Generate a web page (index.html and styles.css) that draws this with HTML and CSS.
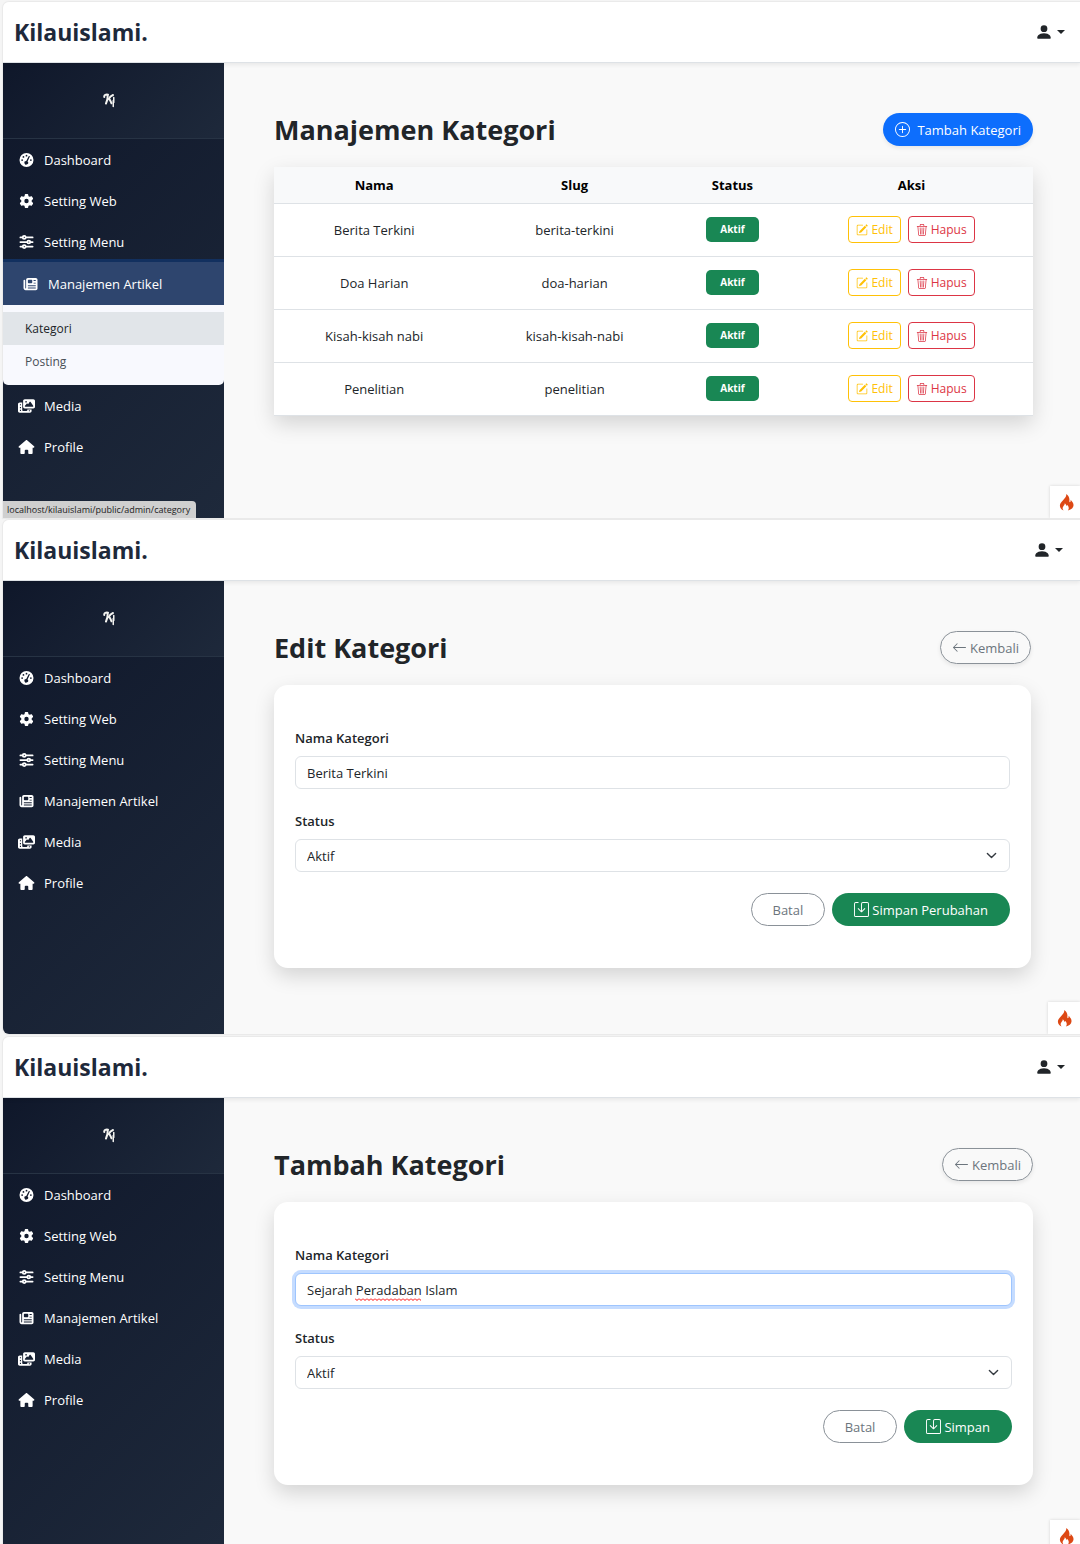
FILE: index.html
```html
<!DOCTYPE html>
<html lang="id">
<head>
<meta charset="utf-8">
<meta name="viewport" content="width=device-width, initial-scale=1">
<title>Kilauislami</title>
<link rel="stylesheet" href="styles.css">
</head>
<body>
<svg class="sprite" aria-hidden="true">
  <symbol id="i-dash" viewBox="0 0 16 16"><path fill-rule="evenodd" d="M8 0a8 8 0 1 1 0 16A8 8 0 0 1 8 0zM8 2a1 1 0 1 0 0 2 1 1 0 0 0 0-2zM4.500 3.500a1 1 0 1 0 0 2 1 1 0 0 0 0-2zM3 7a1 1 0 1 0 0 2 1 1 0 0 0 0-2zM13 7a1 1 0 1 0 0 2 1 1 0 0 0 0-2zM10.500 3.800L7.700 9a2.100 2.100 0 1 0 1.500.600l2.500-5.200a.650.650 0 0 0-1.200-.600z"/></symbol>
  <symbol id="i-gear" viewBox="0 0 512 512"><path d="M495.9 166.6c3.2 8.7 .5 18.4-6.4 24.6l-43.3 39.4c1.1 8.3 1.7 16.8 1.7 25.4s-.6 17.1-1.7 25.4l43.3 39.4c6.9 6.2 9.6 15.9 6.4 24.6c-4.4 11.9-9.7 23.3-15.8 34.3l-4.7 8.1c-6.600 11-14 21.400-22.100 31.200c-5.900 7.200-15.700 9.600-24.500 6.800l-55.700-17.700c-13.400 10.300-28.200 18.900-44 25.400l-12.500 57.100c-2 9.100-9 16.300-18.200 17.800c-13.800 2.300-28 3.500-42.500 3.500s-28.700-1.200-42.500-3.500c-9.200-1.500-16.200-8.700-18.200-17.800l-12.500-57.100c-15.800-6.500-30.600-15.100-44-25.400L83.100 425.900c-8.800 2.800-18.600 .3-24.500-6.800c-8.100-9.800-15.500-20.200-22.100-31.200l-4.700-8.100c-6.100-11-11.400-22.400-15.800-34.300c-3.200-8.700-.5-18.400 6.400-24.600l43.300-39.400C64.600 273.100 64 264.600 64 256s.6-17.100 1.700-25.400L22.400 191.200c-6.900-6.200-9.600-15.900-6.400-24.600c4.400-11.900 9.700-23.300 15.800-34.300l4.700-8.100c6.600-11 14-21.400 22.100-31.200c5.900-7.200 15.700-9.600 24.500-6.800l55.700 17.700c13.400-10.300 28.200-18.900 44-25.400l12.500-57.100c2-9.100 9-16.300 18.200-17.800C227.300 1.200 241.500 0 256 0s28.700 1.200 42.500 3.500c9.200 1.500 16.200 8.700 18.200 17.800l12.500 57.100c15.800 6.500 30.600 15.100 44 25.400l55.700-17.700c8.800-2.800 18.600-.3 24.500 6.800c8.100 9.800 15.500 20.200 22.100 31.200l4.700 8.100c6.100 11 11.400 22.400 15.800 34.300zM256 336a80 80 0 1 0 0-160 80 80 0 1 0 0 160z"/></symbol>
  <symbol id="i-sliders" viewBox="0 0 16 16"><g fill="none" stroke="currentColor" stroke-width="2" stroke-linecap="round"><path d="M1 2.800h2.500M7.300 2.800H15M1 8h7.700M12.500 8H15M1 13.200h2.500M7.300 13.200H15"/><circle cx="5.400" cy="2.800" r="1.700"/><circle cx="10.600" cy="8" r="1.700"/><circle cx="5.400" cy="13.200" r="1.700"/></g></symbol>
  <symbol id="i-news" viewBox="0 0 512 512"><path fill-rule="evenodd" d="M96 96c0-35.300 28.700-64 64-64H448c35.300 0 64 28.700 64 64V416c0 35.300-28.700 64-64 64H80c-44.200 0-80-35.800-80-80V128c0-17.700 14.300-32 32-32s32 14.300 32 32V400c0 8.800 7.200 16 16 16s16-7.200 16-16V96zm64 24v80c0 13.300 10.700 24 24 24H296c13.300 0 24-10.700 24-24V120c0-13.300-10.700-24-24-24H184c-13.300 0-24 10.700-24 24zm208-8v32h80v-32zm0 96v32h80v-32zM160 304v32h288v-32zm0 80v32h288v-32z"/></symbol>
  <symbol id="i-media" viewBox="0 0 640 512"><path fill-rule="evenodd" d="M256 0H576c35.300 0 64 28.700 64 64V288c0 35.300-28.700 64-64 64H256c-35.300 0-64-28.700-64-64V64c0-35.300 28.700-64 64-64zM476 106.700C471.500 100 464 96 456 96s-15.500 4-20 10.700l-56 84L362.700 169c-4.600-5.700-11.500-9-18.700-9s-14.200 3.300-18.700 9l-64 80c-5.800 7.200-6.900 17.100-2.900 25.400s12.400 13.600 21.600 13.600H552c8.900 0 17-4.900 21.200-12.700s3.700-17.300-1.200-24.600zM336 96a32 32 0 1 0-64 0 32 32 0 1 0 64 0zM64 128h96V384v32c0 17.700 14.300 32 32 32h128c17.700 0 32-14.300 32-32V384H512v64c0 35.300-28.700 64-64 64H64c-35.300 0-64-28.700-64-64V192c0-35.300 28.700-64 64-64zm8 64v40h40v-40zm0 104v40h40v-40zm0 104v40h40v-40zm336 16v36h40v-36z"/></symbol>
  <symbol id="i-home" viewBox="0 0 576 512"><path d="M575.800 255.500c0 18-15 32.100-32 32.100h-32l.7 160.200c0 2.700-.2 5.400-.5 8.100V472c0 22.100-17.900 40-40 40H392c-22.100 0-40-17.900-40-40V384c0-17.700-14.300-32-32-32H256c-17.700 0-32 14.300-32 32v88c0 22.100-17.900 40-40 40H104c-22.100 0-40-17.900-40-40V287.600H32c-18 0-32-14-32-32.100c0-9 3-17 10-24L266.400 8c7-7 15-8 22-8s15 2 21 7L564.800 231.500c8 7 12 15 11 24z"/></symbol>
  <symbol id="i-logo" viewBox="0 0 24 28"><g fill="none" stroke="currentColor" stroke-linecap="round" stroke-linejoin="round"><path stroke-width="4" d="M2.500 7C2 3 6 1.500 10 2.500M9.500 3.500C9.500 9 8.500 15 6 20"/><path stroke-width="4" d="M20 3C16 4.500 13 8 11.500 11M11.500 11c3 1 4 5 5.500 8.500"/><path stroke-width="3" d="M21.500 8v10M20.500 14v12"/></g></symbol>
  <symbol id="i-person" viewBox="0 0 16 16"><path d="M3 14s-1 0-1-1 1-4 6-4 6 3 6 4-1 1-1 1zm5-6a3 3 0 1 0 0-6 3 3 0 0 0 0 6"/></symbol>
  <symbol id="i-plus" viewBox="0 0 16 16"><path d="M8 15A7 7 0 1 1 8 1a7 7 0 0 1 0 14m0 1A8 8 0 1 0 8 0a8 8 0 0 0 0 16"/><path d="M8 4a.5.5 0 0 1 .5.5v3h3a.5.5 0 0 1 0 1h-3v3a.5.5 0 0 1-1 0v-3h-3a.5.5 0 0 1 0-1h3v-3A.5.5 0 0 1 8 4"/></symbol>
  <symbol id="i-pencil" viewBox="0 0 16 16"><path d="M15.502 1.940a.5.5 0 0 1 0 .706L14.459 3.690l-2-2L13.502.646a.5.5 0 0 1 .707 0l1.293 1.293zm-1.750 2.456-2-2L4.939 9.210a.5.5 0 0 0-.121.196l-.805 2.414a.25.25 0 0 0 .316.316l2.414-.805a.5.5 0 0 0 .196-.120z"/><path fill-rule="evenodd" d="M1 13.500A1.500 1.500 0 0 0 2.500 15h11a1.500 1.500 0 0 0 1.500-1.500v-6a.5.5 0 0 0-1 0v6a.5.5 0 0 1-.5.5h-11a.5.5 0 0 1-.5-.5v-11a.5.5 0 0 1 .5-.5H9a.5.5 0 0 0 0-1H2.500A1.500 1.500 0 0 0 1 2.500z"/></symbol>
  <symbol id="i-trash" viewBox="0 0 16 16"><path d="M6.500 1h3a.5.5 0 0 1 .5.5v1H6v-1a.5.5 0 0 1 .5-.5M11 2.500v-1A1.500 1.500 0 0 0 9.500 0h-3A1.500 1.500 0 0 0 5 1.500v1H1.500a.5.5 0 0 0 0 1h.538l.853 10.660A2 2 0 0 0 4.885 16h6.230a2 2 0 0 0 1.994-1.840l.853-10.660h.538a.5.5 0 0 0 0-1zm1.958 1-.846 10.580a1 1 0 0 1-.997.920h-6.230a1 1 0 0 1-.997-.920L3.042 3.500zm-7.487 1a.5.5 0 0 1 .528.470l.5 8.500a.5.5 0 0 1-.998.060L5 5.030a.5.5 0 0 1 .470-.530Zm5.058 0a.5.5 0 0 1 .470.530l-.5 8.500a.5.5 0 1 1-.998-.060l.5-8.500a.5.5 0 0 1 .528-.470M8 4.500a.5.5 0 0 1 .5.5v8.500a.5.5 0 0 1-1 0V5a.5.5 0 0 1 .5-.5"/></symbol>
  <symbol id="i-left" viewBox="0 0 16 16"><path fill-rule="evenodd" d="M15 8a.5.5 0 0 0-.5-.5H2.707l3.147-3.146a.5.5 0 1 0-.708-.708l-4 4a.5.5 0 0 0 0 .708l4 4a.5.5 0 0 0 .708-.708L2.707 8.500H14.500A.5.5 0 0 0 15 8"/></symbol>
  <symbol id="i-save" viewBox="0 0 16 16"><path d="M2 1a1 1 0 0 0-1 1v12a1 1 0 0 0 1 1h12a1 1 0 0 0 1-1V2a1 1 0 0 0-1-1H9.500a1 1 0 0 0-1 1v7.293l2.646-2.647a.5.5 0 0 1 .708.708l-3.500 3.500a.5.5 0 0 1-.708 0l-3.500-3.500a.5.5 0 1 1 .708-.708L7.500 9.293V2a2 2 0 0 1 2-2H14a2 2 0 0 1 2 2v12a2 2 0 0 1-2 2H2a2 2 0 0 1-2-2V2a2 2 0 0 1 2-2h2.500a.5.5 0 0 1 0 1z"/></symbol>
  <symbol id="i-flame" viewBox="0 0 16 18"><path d="M7.600 0C8.300 2.500 6.500 4.300 4.300 6.500 2 8.800.8 10.200 1 12.700c.2 2.300 1.600 4 3.900 4.800-1.300-1.400-1.400-2.900-.2-4.500.9-1.100 1.600-1.900 1.300-3.200 1.200.7 1.700 1.700 1.500 3 .6-.3.900-.8 1-1.300 1.800 1.700 2.700 3.900 1 6 3.200-.8 5.900-2.800 6-5.700.1-2.200-1.500-4-3.200-5.700.3 1.200.1 2.200-.8 2.700-.8-.9-.3-1.900-.4-3.200C11 3.300 9.700 1.300 7.600 0z"/></symbol>
</svg>

<section class="panel">
  <header class="topbar"><a class="brand" href="#">Kilauislami.</a><button class="user" type="button" aria-label="Akun"><svg><use href="#i-person"/></svg><span class="caret"></span></button></header>
  <div class="body">
    <aside class="sidebar">
      <div class="logo"><svg><use href="#i-logo"/></svg></div>
      <nav>
        <a class="item" href="#"><svg><use href="#i-dash"/></svg>Dashboard</a>
        <a class="item" href="#"><svg><use href="#i-gear"/></svg>Setting Web</a>
        <a class="item" href="#"><svg><use href="#i-sliders"/></svg>Setting Menu</a>
        <a class="item active" href="#"><svg><use href="#i-news"/></svg>Manajemen Artikel</a>
        <div class="submenu"><a class="current" href="#">Kategori</a><a href="#">Posting</a></div>
        <a class="item" href="#"><svg><use href="#i-media"/></svg>Media</a>
        <a class="item" href="#"><svg><use href="#i-home"/></svg>Profile</a>
      </nav>
    </aside>
    <main>
      <div class="heading"><h1>Manajemen Kategori</h1><a class="btn primary" href="#"><svg><use href="#i-plus"/></svg>Tambah Kategori</a></div>
      <table>
        <colgroup><col class="c-name"><col class="c-slug"><col class="c-status"><col></colgroup>
        <thead><tr><th>Nama</th><th>Slug</th><th>Status</th><th>Aksi</th></tr></thead>
        <tbody>
          <tr><td>Berita Terkini</td><td>berita-terkini</td><td><span class="badge">Aktif</span></td><td><div class="actions"><button class="small edit" type="button"><svg><use href="#i-pencil"/></svg>Edit</button><button class="small delete" type="button"><svg><use href="#i-trash"/></svg>Hapus</button></div></td></tr>
          <tr><td>Doa Harian</td><td>doa-harian</td><td><span class="badge">Aktif</span></td><td><div class="actions"><button class="small edit" type="button"><svg><use href="#i-pencil"/></svg>Edit</button><button class="small delete" type="button"><svg><use href="#i-trash"/></svg>Hapus</button></div></td></tr>
          <tr><td>Kisah-kisah nabi</td><td>kisah-kisah-nabi</td><td><span class="badge">Aktif</span></td><td><div class="actions"><button class="small edit" type="button"><svg><use href="#i-pencil"/></svg>Edit</button><button class="small delete" type="button"><svg><use href="#i-trash"/></svg>Hapus</button></div></td></tr>
          <tr><td>Penelitian</td><td>penelitian</td><td><span class="badge">Aktif</span></td><td><div class="actions"><button class="small edit" type="button"><svg><use href="#i-pencil"/></svg>Edit</button><button class="small delete" type="button"><svg><use href="#i-trash"/></svg>Hapus</button></div></td></tr>
        </tbody>
      </table>
    </main>
  </div>
  <div class="linkbar">localhost/kilauislami/public/admin/category</div>
  <button class="debug" type="button" aria-label="Debug"><svg><use href="#i-flame"/></svg></button>
</section>

<section class="panel narrow">
  <header class="topbar"><a class="brand" href="#">Kilauislami.</a><button class="user" type="button" aria-label="Akun"><svg><use href="#i-person"/></svg><span class="caret"></span></button></header>
  <div class="body">
    <aside class="sidebar">
      <div class="logo"><svg><use href="#i-logo"/></svg></div>
      <nav>
        <a class="item" href="#"><svg><use href="#i-dash"/></svg>Dashboard</a>
        <a class="item" href="#"><svg><use href="#i-gear"/></svg>Setting Web</a>
        <a class="item" href="#"><svg><use href="#i-sliders"/></svg>Setting Menu</a>
        <a class="item" href="#"><svg><use href="#i-news"/></svg>Manajemen Artikel</a>
        <a class="item" href="#"><svg><use href="#i-media"/></svg>Media</a>
        <a class="item" href="#"><svg><use href="#i-home"/></svg>Profile</a>
      </nav>
    </aside>
    <main>
      <div class="heading"><h1>Edit Kategori</h1><a class="btn outline raised" href="#"><svg><use href="#i-left"/></svg>Kembali</a></div>
      <form class="card">
        <label for="name-edit">Nama Kategori</label>
        <div class="field"><input id="name-edit" type="text" value="Berita Terkini"></div>
        <label for="status-edit">Status</label>
        <div class="field"><select id="status-edit"><option>Aktif</option></select></div>
        <div class="buttons"><button class="btn outline wide" type="button">Batal</button><button class="btn success wide" type="button"><svg><use href="#i-save"/></svg>Simpan Perubahan</button></div>
      </form>
    </main>
  </div>
  <button class="debug" type="button" aria-label="Debug"><svg><use href="#i-flame"/></svg></button>
</section>

<section class="panel cropped">
  <header class="topbar"><a class="brand" href="#">Kilauislami.</a><button class="user" type="button" aria-label="Akun"><svg><use href="#i-person"/></svg><span class="caret"></span></button></header>
  <div class="body">
    <aside class="sidebar">
      <div class="logo"><svg><use href="#i-logo"/></svg></div>
      <nav>
        <a class="item" href="#"><svg><use href="#i-dash"/></svg>Dashboard</a>
        <a class="item" href="#"><svg><use href="#i-gear"/></svg>Setting Web</a>
        <a class="item" href="#"><svg><use href="#i-sliders"/></svg>Setting Menu</a>
        <a class="item" href="#"><svg><use href="#i-news"/></svg>Manajemen Artikel</a>
        <a class="item" href="#"><svg><use href="#i-media"/></svg>Media</a>
        <a class="item" href="#"><svg><use href="#i-home"/></svg>Profile</a>
      </nav>
    </aside>
    <main>
      <div class="heading"><h1>Tambah Kategori</h1><a class="btn outline raised" href="#"><svg><use href="#i-left"/></svg>Kembali</a></div>
      <form class="card">
        <label for="name-add">Nama Kategori</label>
        <div class="field"><input class="focused" id="name-add" type="text" value="Sejarah Peradaban Islam"><span class="squiggle"></span></div>
        <label for="status-add">Status</label>
        <div class="field"><select id="status-add"><option>Aktif</option></select></div>
        <div class="buttons"><button class="btn outline wide" type="button">Batal</button><button class="btn success wide" type="button"><svg><use href="#i-save"/></svg>Simpan</button></div>
      </form>
    </main>
  </div>
  <button class="debug" type="button" aria-label="Debug"><svg><use href="#i-flame"/></svg></button>
</section>
</body>
</html>
```
FILE: styles.css
```css
* { box-sizing: border-box; }
body {
  margin: 0;
  padding: 2px 0 0 3px;
  min-height: 100vh;
  display: grid;
  grid-template-rows: minmax(516px, auto) minmax(515px, auto) minmax(507px, 1fr);
  row-gap: 2px;
  background: #f5f5f5;
  color: #212529;
  font: 13px/22px "Open Sans", "Noto Sans", sans-serif;
}
a { color: inherit; text-decoration: none; }
button, input, select { font: inherit; color: inherit; margin: 0; }
button { cursor: pointer; }
svg { fill: currentColor; flex: none; width: 15px; height: 15px; }
.sprite { position: absolute; width: 0; height: 0; }

.panel {
  --edge: 0px;
  position: relative;
  display: flex;
  flex-direction: column;
  overflow: hidden;
  border-radius: 6px 0 0 0;
  background: #f9f9f9;
  box-shadow: 0 0 1px 1px #e9e9e9;
}
.narrow { --edge: 2px; border-radius: 6px 0 0 6px; margin-bottom: 1px; }

.topbar {
  position: relative;
  display: flex;
  align-items: center;
  justify-content: space-between;
  height: 61px;
  padding: 0 calc(15px + var(--edge)) 0 11px;
  background: #fff;
  border-bottom: 1px solid #dee2e6;
  box-shadow: 0 2px 4px rgba(0, 0, 0, .07);
}
.brand { font-size: 23px; line-height: 32px; font-weight: 700; color: #1e293b; }
.user { display: flex; align-items: center; gap: 4px; padding: 0; border: 0; background: none; color: #212529; }
.user svg { width: 18px; height: 18px; }
.caret { border: 4px solid transparent; border-top-color: currentColor; border-bottom: 0; }

.body { flex: 1; display: flex; }
.sidebar { width: 221px; flex: none; background: linear-gradient(135deg, #0f172a, #1e293b); color: #fff; }
.logo {
  display: flex;
  align-items: center;
  justify-content: center;
  height: 76px;
  padding-right: 10px;
  background: linear-gradient(135deg, #0f172a, #1e293b);
  border-bottom: 1px solid #273344;
}
.logo svg { width: 12px; height: 15px; color: #f3f3f0; }
.item { display: flex; align-items: center; gap: 9px; height: 41px; padding-left: 15px; }
.item svg { width: 17px; height: 14px; }
.active { height: 43px; padding-left: 19px; background: #2e456e; box-shadow: 0 -3px 0 #12305f; }
.submenu { padding: 7px 0; background: #f8f9fe; border-radius: 0 0 5px 5px; }
.submenu a { display: block; padding: 0 22px; font-size: 12px; line-height: 33px; color: #495057; }
.submenu .current { background: #e1e5e9; color: #212529; }

main { flex: 1; min-width: 0; padding: 50px calc(47px + var(--edge)) 47px 50px; }
.heading { display: flex; align-items: center; justify-content: space-between; height: 33px; margin-bottom: 21px; }
h1 { margin: 0; font-size: 27px; line-height: 33px; font-weight: 700; }

.btn {
  display: flex;
  align-items: center;
  justify-content: center;
  height: 33px;
  padding: 0 11px;
  border: 1px solid transparent;
  border-radius: 17px;
  white-space: nowrap;
}
.primary { gap: 7px; background: #0d6efd; color: #fff; box-shadow: 0 2px 4px rgba(0, 0, 0, .08); }
.outline { gap: 3px; border-color: #8a9198; background: none; color: #6c757d; }
.raised { box-shadow: 0 2px 4px rgba(0, 0, 0, .08); }
.success { gap: 3px; background: #198754; color: #fff; }
.wide { padding: 0 21px; }

table {
  width: 100%;
  border-collapse: collapse;
  table-layout: fixed;
  background: #fff;
  text-align: center;
  box-shadow: 0 8px 20px rgba(0, 0, 0, .15);
}
.c-name, .c-slug { width: 26.4%; }
.c-status { width: 15.2%; }
th { height: 36px; padding: 0; background: #f8f9fa; color: #000; font-weight: 700; border-bottom: 1px solid #dee2e6; }
td { height: 53px; padding: 0; border-bottom: 1px solid #dee2e6; }
.badge {
  display: inline-block;
  width: 53px;
  border-radius: 5px;
  background: #198754;
  color: #fff;
  font-size: 10px;
  line-height: 25px;
  font-weight: 700;
  vertical-align: middle;
}
.actions { display: flex; justify-content: center; gap: 7px; }
.small {
  display: flex;
  align-items: center;
  gap: 3px;
  height: 27px;
  padding: 0 7px;
  border: 1px solid currentColor;
  border-radius: 4px;
  background: #fff;
  font-size: 12px;
}
.small svg { width: 12px; height: 12px; }
.edit { color: #ffc107; }
.delete { color: #dc3545; }

.card { padding: 42px 21px; border-radius: 14px; background: #fff; box-shadow: 0 8px 20px rgba(0, 0, 0, .15); }
.card label { display: block; margin-bottom: 7px; font-weight: 600; }
.field { position: relative; margin-bottom: 21px; }
.field input, .field select {
  display: block;
  width: 100%;
  height: 33px;
  padding: 0 11px;
  border: 1px solid #dee2e6;
  border-radius: 6px;
  background: #fff;
  outline: 0;
}
.field select {
  appearance: none;
  background: #fff url("data:image/svg+xml,%3Csvg xmlns='http://www.w3.org/2000/svg' viewBox='0 0 16 16'%3E%3Cpath fill='none' stroke='%23343a40' stroke-linecap='round' stroke-linejoin='round' stroke-width='2' d='m2 5 6 6 6-6'/%3E%3C/svg%3E") no-repeat right 12px center / 11px 11px;
}
.field .focused { border-color: #9ec5fe; box-shadow: 0 0 0 3px #c5dcff; }
.squiggle {
  position: absolute;
  left: 60px;
  top: 25px;
  width: 66px;
  height: 3px;
  background: url("data:image/svg+xml,%3Csvg xmlns='http://www.w3.org/2000/svg' width='4' height='3'%3E%3Cpath fill='none' stroke='red' d='M0 .5 2 2.5 4 .5'/%3E%3C/svg%3E") repeat-x;
}
.buttons { display: flex; justify-content: flex-end; gap: 7px; }

.linkbar {
  position: absolute;
  left: 0;
  bottom: 0;
  padding: 0 6px 0 4px;
  border-radius: 0 4px 0 0;
  background: #cfcfcf;
  color: #222;
  font-size: 9px;
  line-height: 17px;
}
.debug {
  position: absolute;
  right: 0;
  bottom: 0;
  display: flex;
  align-items: center;
  width: calc(30px + var(--edge));
  height: 32px;
  padding: 0 0 0 9px;
  border: 0;
  background: #fff;
  color: #dd4814;
  box-shadow: 0 0 3px rgba(0, 0, 0, .15);
}
.debug svg { width: 15px; height: 17px; }
.cropped .debug { bottom: -8px; }
```
